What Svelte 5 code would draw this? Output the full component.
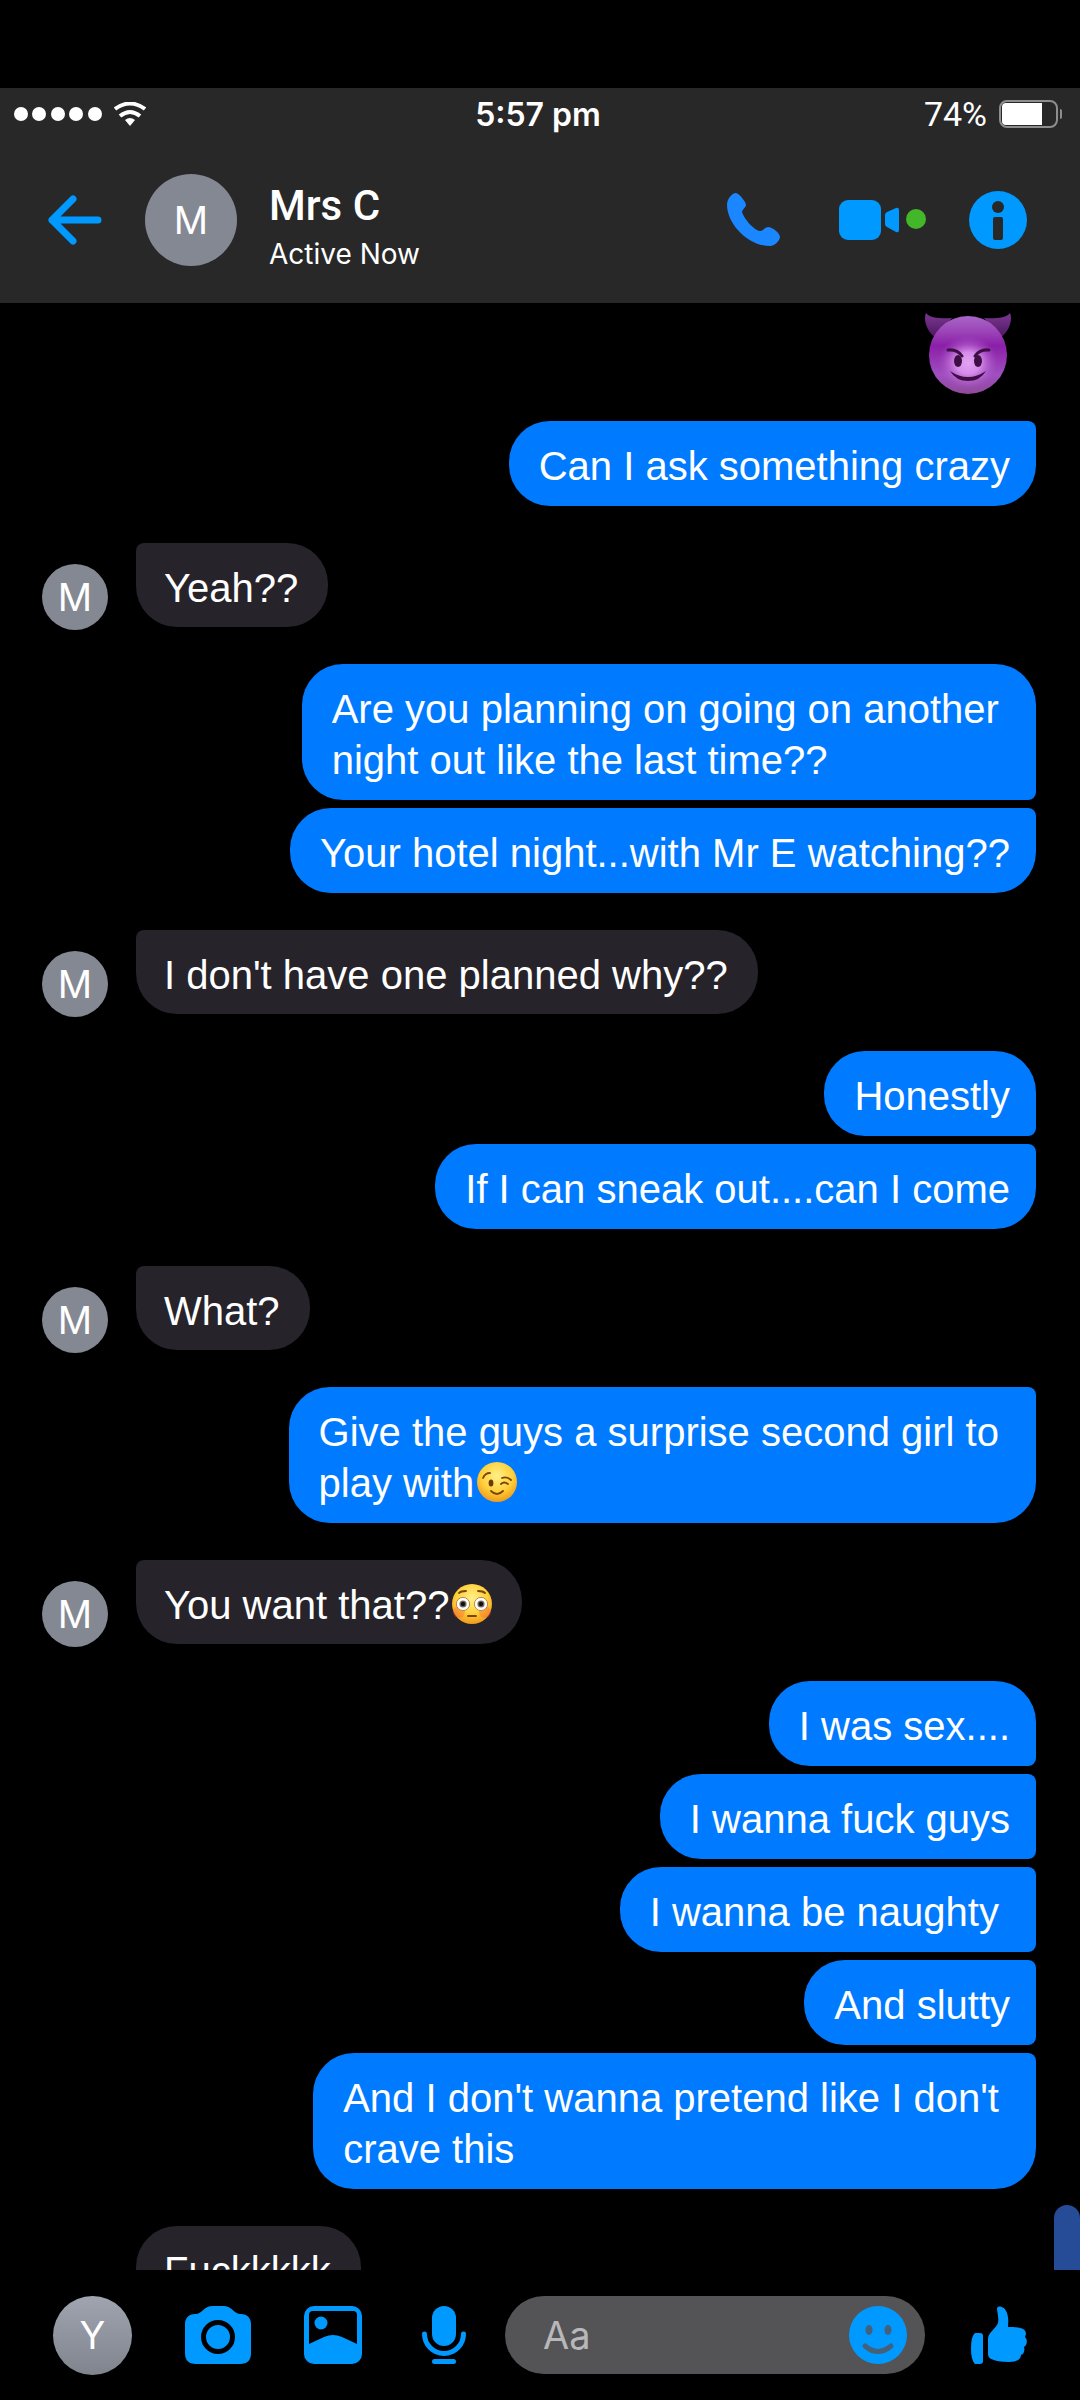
<script lang="ts">
  type Message = { text: string; emoji?: 'wink' | 'flushed' }
  type Group = { from: 'me' | 'them'; open?: boolean; messages: Message[] }

  const contact = { name: 'Mrs C', initial: 'M', status: 'Active Now' }

  // open: the group carries on below the fold
  const groups: Group[] = [
    { from: 'me', messages: [{ text: 'Can I ask something crazy' }] },
    { from: 'them', messages: [{ text: 'Yeah??' }] },
    {
      from: 'me',
      messages: [
        { text: 'Are you planning on going on another\u00a0\nnight out like the last time??' },
        { text: 'Your hotel night...with Mr E watching??' },
      ],
    },
    { from: 'them', messages: [{ text: "I don't have one planned why??" }] },
    { from: 'me', messages: [{ text: 'Honestly' }, { text: 'If I can sneak out....can I come' }] },
    { from: 'them', messages: [{ text: 'What?' }] },
    {
      from: 'me',
      messages: [{ text: 'Give the guys a surprise second girl to\u00a0\nplay with', emoji: 'wink' }],
    },
    { from: 'them', messages: [{ text: 'You want that??', emoji: 'flushed' }] },
    {
      from: 'me',
      messages: [
        { text: 'I was sex....' },
        { text: 'I wanna fuck guys' },
        { text: 'I wanna be naughty\u00a0' },
        { text: 'And slutty' },
        { text: "And I don't wanna pretend like I don't\u00a0\ncrave this" },
      ],
    },
    { from: 'them', open: true, messages: [{ text: 'Fuckkkkk' }] },
  ]

  let draft = $state('')
</script>

{#snippet emoji(name: string)}
  <svg class="emoji" viewBox="0 0 40 40" role="img" aria-label={name}>
    <circle cx="20" cy="20" r="20" fill="url(#face)" />
    {#if name === 'wink'}
      <ellipse cx="14" cy="21" rx="2.4" ry="3.6" fill="#6b3a08" />
      <path d="M6 16Q8 11 13 11M25 16Q30 14 34 18M24 22Q27 19 31 22M14 29Q20 35 26 29" fill="none" stroke="#7a4509" stroke-width="1.8" stroke-linecap="round" />
    {:else}
      <circle cx="7" cy="28" r="6" fill="#ff5a36" opacity=".35" />
      <circle cx="33" cy="28" r="6" fill="#ff5a36" opacity=".35" />
      <circle cx="11" cy="20" r="6.6" fill="#fff" stroke="#b98a4a" stroke-width="1" />
      <circle cx="29" cy="20" r="6.6" fill="#fff" stroke="#b98a4a" stroke-width="1" />
      <circle cx="11" cy="20" r="3.6" fill="#7a6a5c" />
      <circle cx="29" cy="20" r="3.6" fill="#7a6a5c" />
      <circle cx="11" cy="20" r="2.2" fill="#111" />
      <circle cx="29" cy="20" r="2.2" fill="#111" />
      <path d="M7 9Q9 7 14 7M26 7Q31 7 33 9M16 32H24" fill="none" stroke="#7a4509" stroke-width="1.8" stroke-linecap="round" />
    {/if}
  </svg>
{/snippet}

<svg class="defs" aria-hidden="true">
  <defs>
    <radialGradient id="face" cx=".5" cy=".35" r=".65">
      <stop offset="0" stop-color="#fff08a" />
      <stop offset=".6" stop-color="#ffd03a" />
      <stop offset="1" stop-color="#f09a1c" />
    </radialGradient>
    <linearGradient id="devil" x1="0" y1="0" x2="0" y2="1">
      <stop offset="0" stop-color="#a866c6" />
      <stop offset=".2" stop-color="#9c44b8" />
      <stop offset=".38" stop-color="#8a1fa8" />
      <stop offset=".75" stop-color="#a04fc0" />
      <stop offset="1" stop-color="#8f4a9a" />
    </linearGradient>
    <linearGradient id="horn" x1="0" y1="0" x2="0" y2="1">
      <stop offset="0" stop-color="#7c3a92" />
      <stop offset="1" stop-color="#4d1460" />
    </linearGradient>
    <radialGradient id="glow">
      <stop offset="0" stop-color="#e2a4f2" />
      <stop offset=".4" stop-color="#d68cea" />
      <stop offset="1" stop-color="#a850c4" stop-opacity="0" />
    </radialGradient>
  </defs>
</svg>

<div class="phone">
  <header>
    <div class="status">
      <div class="signal">
        <svg width="88" height="14" viewBox="0 0 88 14" aria-hidden="true">
          {#each [7, 25, 44, 62, 81] as cx}
            <circle {cx} cy="7" r="7" fill="#fff" />
          {/each}
        </svg>
        <svg width="32" height="24" viewBox="0 0 32 24" aria-hidden="true">
          <path d="M1 7Q16 -4 31 7M6 14Q16 6 26 14" fill="none" stroke="#fff" stroke-width="4" />
          <path d="M11 18Q16 14 21 18L16 24Z" fill="#fff" />
        </svg>
      </div>
      <span class="time">5:57 pm</span>
      <div class="power">
        <span>74%</span>
        <svg width="63" height="28" viewBox="0 0 63 28" aria-hidden="true">
          <rect x="1" y="1" width="57" height="26" rx="7" fill="none" stroke="#8e8e8e" stroke-width="2" />
          <path d="M7 3H43V25H7Q3 25 3 21V7Q3 3 7 3Z" fill="#fff" />
          <path d="M61 9Q63 9 63 11V17Q63 19 61 19Z" fill="#8e8e8e" />
        </svg>
      </div>
    </div>

    <div class="bar">
      <button class="back" aria-label="Back">
        <svg width="54" height="50" viewBox="0 0 54 50">
          <path d="M25 4L4 25L25 46M4 25H50" fill="none" stroke="#0099ff" stroke-width="7" stroke-linecap="round" stroke-linejoin="round" />
        </svg>
      </button>
      <span class="avatar large">{contact.initial}</span>
      <div class="who">
        <h1>{contact.name}</h1>
        <p>{contact.status}</p>
      </div>
      <button class="call" aria-label="Call">
        <svg width="54" height="54" viewBox="0 0 54 54">
          <path d="M9 0C12 0 19 9 19 12C19 14 15 17 15 19C17 26 28 38 33 38C36 38 38 34 41 34C45 34 53 40 53 44C53 47 48 53 43 53C20 53 0 30 0 12C0 6 5 0 9 0Z" fill="#1a86ff" />
        </svg>
      </button>
      <button class="video" aria-label="Video call, available">
        <svg width="87" height="40" viewBox="0 0 87 40">
          <rect width="42" height="40" rx="9" fill="#0099ff" />
          <path d="M48 12L57 8Q60 7 60 10V30Q60 33 57 32L48 27Q46 26 46 24V15Q46 13 48 12Z" fill="#0099ff" />
          <circle cx="77" cy="19" r="10" fill="#42b72a" />
        </svg>
      </button>
      <button aria-label="Conversation info">
        <svg width="58" height="58" viewBox="0 0 58 58">
          <circle cx="29" cy="29" r="29" fill="#0099ff" />
          <circle cx="29" cy="16" r="6" fill="#282828" />
          <rect x="24" y="26" width="10" height="23" rx="2" fill="#282828" />
        </svg>
      </button>
    </div>
  </header>

  <main>
    <svg class="devil" viewBox="0 0 88 84" role="img" aria-label="smiling devil">
      <path d="M1 1C4 6 18 7 27 6L11 26C2 20 -2 8 1 1ZM85 1C82 6 68 7 59 6L75 26C84 20 88 8 85 1Z" fill="url(#horn)" />
      <circle cx="43" cy="43" r="39" fill="url(#devil)" />
      <ellipse cx="43" cy="51" rx="30" ry="27" fill="url(#glow)" />
      <path d="M23 38Q32 37 37 44M64 38Q55 37 50 44" fill="none" stroke="#3d0f45" stroke-width="3" stroke-linecap="round" />
      <ellipse cx="33" cy="49" rx="4" ry="6" fill="#3d0f45" />
      <ellipse cx="53" cy="49" rx="4" ry="6" fill="#3d0f45" />
      <path d="M25 59Q43 71 61 59Q55 69 43 69Q31 69 25 59Z" fill="#3d0f45" />
    </svg>

    {#each groups as group}
      <section class="group {group.from}">
        {#if group.from === 'them'}
          <span class="avatar small" class:hidden={group.open}>{contact.initial}</span>
        {/if}
        <div class="stack">
          {#each group.messages as message, i}
            <p
              class="bubble"
              class:joined-up={i > 0 || (group.messages.length === 1 && !group.open)}
              class:joined-down={i < group.messages.length - 1}
            >{message.text}{#if message.emoji}{@render emoji(message.emoji)}{/if}</p>
          {/each}
        </div>
      </section>
    {/each}
    <div class="scrollbar"></div>
  </main>

  <footer>
    <button class="avatar me-avatar" aria-label="Your profile">Y</button>
    <button class="camera" aria-label="Camera">
      <svg width="66" height="58" viewBox="0 0 66 58">
        <path d="M10 8C18 8 18 0 28 0H38C48 0 48 8 56 8C62 8 66 12 66 18V47Q66 58 55 58H11Q0 58 0 47V18C0 12 4 8 10 8Z" fill="#0099ff" />
        <circle cx="33" cy="31" r="14.5" fill="none" stroke="#000" stroke-width="5" />
      </svg>
    </button>
    <button class="photos" aria-label="Photos">
      <svg width="58" height="58" viewBox="0 0 58 58">
        <rect width="58" height="58" rx="10" fill="#0099ff" />
        <path d="M9 5H49Q53 5 53 9V38L38 31Q29 27 20 31L5 38V9Q5 5 9 5Z" fill="#000" />
        <circle cx="17" cy="17" r="6.5" fill="#0099ff" />
      </svg>
    </button>
    <button class="mic" aria-label="Voice message">
      <svg width="44" height="58" viewBox="0 0 44 58">
        <rect x="10" width="24" height="40" rx="12" fill="#0099ff" />
        <path d="M2.5 28A19.5 19.5 0 0 0 41.5 28M12.5 55.5H31.5" fill="none" stroke="#0099ff" stroke-width="5" stroke-linecap="round" />
      </svg>
    </button>
    <div class="compose">
      <input type="text" placeholder="Aa" aria-label="Message" bind:value={draft} />
      <button aria-label="Emoji">
        <svg width="58" height="58" viewBox="0 0 58 58">
          <circle cx="29" cy="29" r="29" fill="#0099ff" />
          <ellipse cx="20" cy="24" rx="3.5" ry="5" fill="#44617a" />
          <ellipse cx="39" cy="24" rx="3.5" ry="5" fill="#44617a" />
          <path d="M16 40Q29 51 42 40" fill="none" stroke="#44617a" stroke-width="5" stroke-linecap="round" />
        </svg>
      </button>
    </div>
    <button class="like" aria-label="Like">
      <svg width="56" height="58" viewBox="0 0 56 58">
        <path d="M4 27H9Q12 27 12 30V55Q12 58 9 58H4Q0 54 0 43Q0 30 4 27Z" fill="#0099ff" />
        <path d="M26 2C27 -1 34 0 36 7C38 13 37 18 37 21C44 21 54 21 55 27C55 29 54 30 54 31C57 34 56 39 53 41C54 44 53 48 50 49C50 53 46 56 38 56C30 56 24 55 20 53C17 51 17 49 17 46V33C17 26 25 23 27 17C28 11 26 6 26 2Z" fill="#0099ff" />
      </svg>
    </button>
  </footer>
</div>

<style>
  :global(body) {
    margin: 0;
    background: #000;
  }

  .phone {
    display: flex;
    flex-direction: column;
    box-sizing: border-box;
    height: 100vh;
    padding-top: 88px;
    background: #000;
    color: #fff;
    font-family: Roboto, sans-serif;
  }

  .defs {
    position: absolute;
    width: 0;
    height: 0;
  }

  svg {
    display: block;
  }

  button {
    flex: none;
    padding: 0;
    border: none;
    background: none;
    color: inherit;
    font-family: inherit;
    cursor: pointer;
  }

  header {
    flex: none;
    background: #282828;
  }

  .status {
    display: grid;
    grid-template-columns: 1fr auto 1fr;
    align-items: center;
    height: 52px;
    padding: 0 18px 0 14px;
    font-size: 34px;
  }

  .signal,
  .power {
    display: flex;
    align-items: center;
    gap: 12px;
  }

  .power {
    justify-content: flex-end;
  }

  .time {
    font-family: Inter, sans-serif;
    font-size: 32px;
    font-weight: 600;
  }

  .bar {
    display: flex;
    align-items: center;
    box-sizing: border-box;
    height: 163px;
    padding: 0 53px 4px 48px;
  }

  .avatar {
    display: flex;
    flex: none;
    align-items: center;
    justify-content: center;
    border-radius: 50%;
    background: #848892;
    font-family: Inter, sans-serif;
    font-size: 38px;
  }

  .avatar.large {
    width: 92px;
    height: 92px;
    margin: 0 32px 0 43px;
  }

  .who {
    flex: 1;
    margin-top: 16px;
  }

  h1,
  p {
    margin: 0;
    font-weight: 400;
  }

  h1 {
    font-size: 42px;
    font-weight: 500;
    line-height: 52px;
  }

  .who p {
    font-family: Inter, sans-serif;
    font-size: 28px;
    line-height: 44px;
  }

  .call {
    margin-right: 58px;
  }

  .video {
    margin-right: 43px;
  }

  main {
    position: relative;
    display: flex;
    flex: 1;
    flex-direction: column;
    min-height: 0;
    overflow: hidden;
    padding: 9px 44px 0 42px;
  }

  .devil {
    flex: none;
    align-self: flex-end;
    width: 88px;
    height: 84px;
    margin: 0 23px 25px 0;
  }

  .group {
    display: flex;
    flex: none;
    align-items: flex-end;
    margin-bottom: 37px;
  }

  .stack {
    display: flex;
    flex: 1;
    flex-direction: column;
    align-items: flex-start;
    gap: 8px;
  }

  .me .stack {
    align-items: flex-end;
  }

  .avatar.small {
    width: 66px;
    height: 66px;
    margin: 0 28px -3px 0;
  }

  .hidden {
    visibility: hidden;
  }

  .bubble {
    max-width: 80%;
    padding: 20px 30px 13px 28px;
    border-radius: 41px;
    background: #26232a;
    font-family: "Liberation Sans", Arial, sans-serif;
    font-size: 40px;
    line-height: 51px;
    white-space: pre-line;
  }

  .me .bubble {
    padding: 20px 26px 14px 30px;
    background: #007aff;
  }

  .me .joined-up {
    border-top-right-radius: 8px;
  }

  .me .joined-down {
    border-bottom-right-radius: 8px;
  }

  .them .joined-up {
    border-top-left-radius: 8px;
  }

  .them .joined-down {
    border-bottom-left-radius: 8px;
  }

  .emoji {
    display: inline-block;
    width: 40px;
    height: 40px;
    margin-left: 3px;
    vertical-align: -5px;
  }

  .scrollbar {
    position: absolute;
    right: 0;
    bottom: 0;
    width: 26px;
    height: 65px;
    border-radius: 13px 13px 0 0;
    background: #264c98;
  }

  footer {
    display: flex;
    flex: none;
    align-items: center;
    box-sizing: border-box;
    height: 130px;
    padding: 0 53px;
  }

  .me-avatar {
    width: 79px;
    height: 79px;
    margin-right: 53px;
    background: linear-gradient(#9fa4b0, #80848d);
  }

  .camera {
    margin-right: 53px;
  }

  .photos {
    margin-right: 60px;
  }

  .mic {
    margin-right: 39px;
  }

  .compose {
    display: flex;
    flex: 1;
    align-items: center;
    box-sizing: border-box;
    min-width: 0;
    height: 78px;
    padding: 0 18px 0 38px;
    border-radius: 39px;
    background: #545456;
  }

  input {
    flex: 1;
    min-width: 0;
    padding: 0;
    border: none;
    outline: none;
    background: none;
    color: #fff;
    font-family: Inter, sans-serif;
    font-size: 38px;
  }

  input::placeholder {
    color: #b8b8ba;
    opacity: 1;
  }

  .like {
    margin-left: 46px;
  }
</style>
